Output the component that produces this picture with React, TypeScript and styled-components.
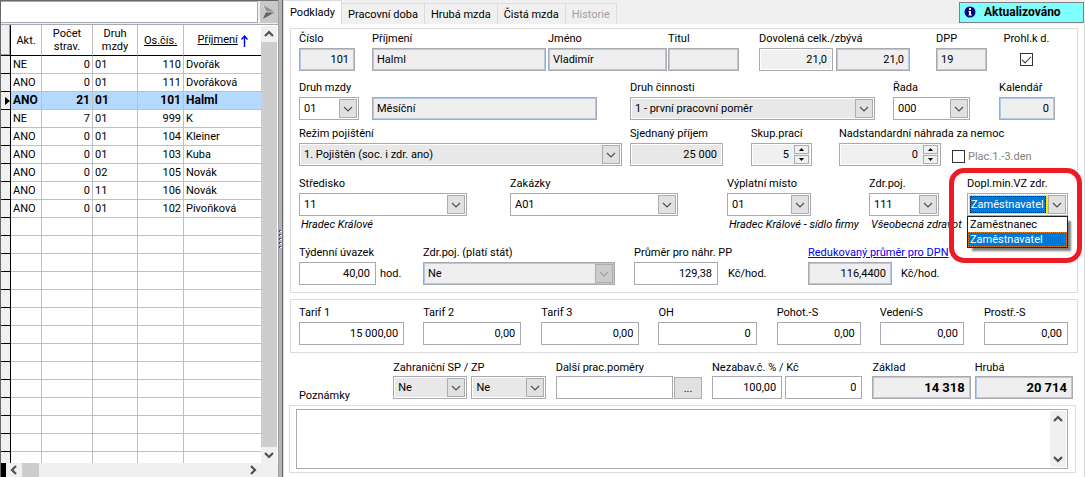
import React, { useId } from 'react';
import styled, { createGlobalStyle, css } from 'styled-components';

const Global = createGlobalStyle`
  *, *::before, *::after { box-sizing: border-box; }
  body { margin: 0; background: #f0f0f0; }
  body, input, select, textarea, button {
    font-family: Roboto, "Liberation Sans", sans-serif;
    font-size: 11px;
    color: #000;
  }
`;

const line = '#a9a9b2';
const soft = '#dcdcdc';

const Window = styled.div`
  display: flex;
  height: 100vh;
  min-height: 460px;
  min-width: 900px;
  overflow: hidden;
`;

/* ---------- left: employee list ---------- */

const ListPane = styled.aside`
  display: flex;
  flex-direction: column;
  flex: none;
  width: 278px;
  border-top: 1px solid #696969;
  border-left: 1px solid #696969;
`;

const SearchBar = styled.div`
  display: flex;
  gap: 2px;
  height: 23px;
`;

const SearchInput = styled.input`
  flex: 1;
  min-width: 0;
  height: 22px;
  border: 1px solid ${line};
  border-left: 0;
  padding: 0 4px;
  background: #fff;
  outline: 0;
`;

const SearchButton = styled.button`
  display: grid;
  place-items: center;
  width: 18px;
  height: 22px;
  padding: 0;
  border: 0;
  background: #c8c8c8;
`;

const GridArea = styled.div`
  display: flex;
  flex: 1;
  min-height: 0;
  border-top: 1px solid ${line};
  background: #fff;
`;

const TableClip = styled.div`
  flex: 1;
  min-width: 0;
  overflow: hidden;
`;

const Table = styled.table`
  width: 100%;
  table-layout: fixed;
  border-spacing: 0;
`;

const Head = styled.th<{ $under?: boolean }>`
  height: 31px;
  padding: 0;
  border-right: 1px solid #c0c0c0;
  border-bottom: 1px solid #000;
  font-weight: 400;
  line-height: 13px;
  text-decoration: ${p => (p.$under ? 'underline' : 'none')};
  &:last-child { border-right: 0; }
`;

const HeadMark = styled.th`
  padding: 0;
  background: #f0f0f0;
  border-right: 1px solid #000;
  border-bottom: 1px solid #000;
  box-shadow: inset -1px -1px #a0a0a0;
`;

const BodyRow = styled.tr<{ $current?: boolean }>`
  ${p => p.$current && css`
    background: #b5d9ff;
    font-weight: 700;
    font-size: 12px;
  `}
`;

const Cell = styled.td<{ $right?: boolean }>`
  height: 18px;
  padding: 0 2px;
  border-right: 1px solid #c0c0c0;
  border-bottom: 1px solid #c0c0c0;
  line-height: 17px;
  white-space: nowrap;
  text-align: ${p => (p.$right ? 'right' : 'left')};
  &:last-child { border-right: 0; }
`;

const MarkCell = styled.td`
  height: 18px;
  padding: 0;
  background: #f0f0f0;
  border-right: 1px solid #000;
  border-bottom: 1px solid #000;
  line-height: 0;
  text-align: right;
`;

const VScroll = styled.div`
  display: flex;
  flex-direction: column;
  justify-content: space-between;
  flex: none;
  width: 16px;
  margin: 1px 1px 0 0;
  background: #cdcdcd;
`;

const ScrollButton = styled.button`
  display: grid;
  place-items: center;
  width: 16px;
  height: 16px;
  padding: 0;
  border: 0;
  background: #f0f0f0;
`;

const HScroll = styled.div`
  display: flex;
  align-items: center;
  height: 14px;
  margin-right: 17px;
  background: #f0f0f0;
  border-left: 5px solid #000;
  button { height: 14px; }
  button:last-child { margin-left: auto; }
`;

const HThumb = styled.span`
  width: 17px;
  height: 14px;
  background: #cdcdcd;
`;

const Splitter = styled.div`
  display: grid;
  align-items: center;
  flex: none;
  width: 5px;
  background: #b4b4b8;
  border-left: 1px solid #a0a0a4;
  border-right: 1px solid #696969;
`;

/* ---------- right: form ---------- */

const FormPane = styled.main`
  display: flex;
  flex-direction: column;
  flex: 1;
  min-width: 0;
`;

const TabBar = styled.div`
  display: flex;
  align-items: flex-end;
  height: 24px;
`;

const Tab = styled.button<{ $active?: boolean }>`
  height: ${p => (p.$active ? 24 : 21)}px;
  padding: 0 6px;
  border: 1px solid ${soft};
  border-bottom: 0;
  border-left-width: ${p => (p.$active ? 1 : 0)}px;
  background: ${p => (p.$active ? '#fff' : '#f0f0f0')};
  white-space: nowrap;
  &:disabled { color: #a0a0a0; }
`;

const Status = styled.output`
  display: flex;
  align-items: center;
  align-self: center;
  gap: 8px;
  width: 125px;
  height: 21px;
  margin: 0 1px 0 auto;
  padding-left: 4px;
  border: 1px solid #808080;
  background: #80ffff;
  font-size: 12px;
  font-weight: 700;
`;

const Panel = styled.div`
  display: flex;
  flex-direction: column;
  flex: 1;
  min-height: 0;
  padding: 4px 6px;
  border: 1px solid ${soft};
  border-top-width: 0;
  border-bottom: 0;
  background: #fff;
`;

const Group = styled.section<{ $top?: number }>`
  margin-top: ${p => p.$top ?? 0}px;
  padding: 1px 9px 7px 8px;
  border: 1px solid ${soft};
`;

const Row = styled.div<{ $top?: number }>`
  display: flex;
  align-items: flex-end;
  margin-top: ${p => p.$top ?? 0}px;
`;

/* $w is the share of the row; $gap the space before the field */
const FieldBox = styled.div<{ $w: number; $gap?: number }>`
  position: relative;
  flex: ${p => p.$w} 1 0;
  min-width: 0;
  margin-left: ${p => p.$gap ?? 0}px;
`;

const Label = styled.label`
  display: block;
  height: 18px;
  line-height: 18px;
  white-space: nowrap;
`;

const LabelLink = styled.a`
  display: block;
  width: max-content;
  height: 18px;
  line-height: 18px;
  color: #0000f0;
  white-space: nowrap;
`;

type Kind = 'edit' | 'locked' | 'grey' | 'plain' | 'dim';
const fills: Record<Kind, { bg: string; ring: string }> = {
  edit: { bg: '#fff', ring: '#fff' },
  locked: { bg: '#efefef', ring: '#aecbea' },
  grey: { bg: '#e8e8e8', ring: '#fff' },
  plain: { bg: '#f0f0f0', ring: '#fff' },
  dim: { bg: '#efefef', ring: '#aecbea' },
};

const boxStyle = css<{ $kind: Kind }>`
  display: block;
  width: 100%;
  min-width: 0;
  height: 23px;
  margin: 0;
  border: 1px solid ${line};
  border-radius: 0;
  outline: 0;
  background: ${p => fills[p.$kind].bg};
  box-shadow: inset 0 0 0 1px ${p => fills[p.$kind].ring};
`;

const Input = styled.input<{ $kind: Kind; $right?: boolean; $bold?: boolean; $spin?: boolean }>`
  ${boxStyle}
  padding: 0 ${p => (p.$spin ? 22 : 5)}px 0 4px;
  text-align: ${p => (p.$right ? 'right' : 'left')};
  ${p => p.$bold && css`font-weight: 700; font-size: 13px;`}
`;

const Holder = styled.div`
  position: relative;
`;

const Select = styled.select<{ $kind: Kind; $focus?: boolean }>`
  ${boxStyle}
  appearance: none;
  padding: 0 20px 0 4px;
  color: #000;
  opacity: 1;
  ${p => p.$focus && css`
    padding-left: 3px;
    color: #fff;
    background: linear-gradient(#0078d7, #0078d7) 2px 2px / calc(100% - 23px) calc(100% - 4px) no-repeat #ffe800;
  `}
`;

const Arrow = styled.span<{ $faint?: boolean }>`
  position: absolute;
  top: 2px;
  right: 2px;
  display: grid;
  place-items: center;
  width: 18px;
  height: 19px;
  border: 1px solid #adadad;
  background: ${p => (p.$faint ? '#cccccc' : '#e1e1e1')};
  color: ${p => (p.$faint ? '#a0a0a0' : '#505050')};
  pointer-events: none;
`;

const FocusDots = styled.span`
  position: absolute;
  inset: 3px 22px 3px 3px;
  border: 1px dotted #10203c;
  pointer-events: none;
`;

const Spin = styled.span`
  position: absolute;
  top: 2px;
  right: 3px;
  display: grid;
  gap: 1px;
  button {
    display: grid;
    place-items: center;
    width: 15px;
    height: 9px;
    padding: 0;
    border: 1px solid #adadad;
    background: #f0f0f0;
  }
`;

const Hint = styled.p`
  height: 18px;
  margin: 0 0 0 2px;
  line-height: 18px;
  font-style: italic;
  white-space: nowrap;
`;

const Unit = styled.span<{ $w: number; $gap: number }>`
  flex: ${p => p.$w} 1 0;
  min-width: 0;
  margin-left: ${p => p.$gap}px;
  line-height: 23px;
  white-space: nowrap;
`;

const CheckField = styled.label<{ $w: number; $gap: number; $stack?: boolean }>`
  display: flex;
  flex: ${p => p.$w} 1 0;
  min-width: 0;
  flex-direction: ${p => (p.$stack ? 'column' : 'row-reverse')};
  align-items: center;
  justify-content: flex-end;
  gap: ${p => (p.$stack ? 8 : 3)}px;
  height: ${p => (p.$stack ? 41 : 20)}px;
  padding-bottom: ${p => (p.$stack ? 5 : 0)}px;
  margin-left: ${p => p.$gap}px;
  color: ${p => (p.$stack ? '#000' : '#808080')};
  white-space: nowrap;
`;

const Check = styled.input`
  appearance: none;
  display: grid;
  place-items: center;
  flex: none;
  width: 13px;
  height: 13px;
  margin: 0;
  border: 1px solid #333;
  background: #fff;
  &:checked::after {
    content: '';
    width: 9px;
    height: 5px;
    border: solid #333;
    border-width: 0 0 1px 1px;
    transform: translateY(-1px) rotate(-45deg);
  }
`;

const Popup = styled.ul`
  position: absolute;
  z-index: 2;
  top: 41px;
  left: 0;
  right: 0;
  margin: 0;
  padding: 0;
  border: 1px solid #222;
  background: #fff;
  box-shadow: 4px 4px 2px -1px rgba(0, 0, 0, 0.5);
  list-style: none;
`;

const Option = styled.li<{ $on?: boolean }>`
  height: 15px;
  padding: 0 1px;
  border: 1px dotted ${p => (p.$on ? '#e08020' : 'transparent')};
  line-height: 13px;
  ${p => p.$on && css`background: #0078d7; color: #fff;`}
`;

const Highlight = styled.div`
  position: absolute;
  z-index: 3;
  inset: -7px -14px -29px -18px;
  border: 5px solid #ee1b24;
  border-radius: 15px;
  pointer-events: none;
`;

const BottomRow = styled.div`
  display: flex;
  align-items: flex-end;
  margin: 7px 5px 0 9px;
  ${Label} {
    height: 16px;
    line-height: 16px;
  }
`;

const NotesTitle = styled.label<{ $w: number }>`
  flex: ${p => p.$w} 1 0;
  line-height: 14px;
  margin-bottom: -4px;
`;

const MoreButton = styled.button`
  width: 28px;
  height: 22px;
  margin-left: 1px;
  padding: 0;
  border: 1px solid #adadad;
  background: #e1e1e1;
`;

const NotesGroup = styled.section`
  display: flex;
  flex: 1;
  min-height: 50px;
  margin: 6px 2px 0 -1px;
  padding: 3px 7px 3px 6px;
  border: 1px solid ${soft};
`;

const NotesFrame = styled.div`
  display: flex;
  flex: 1;
  padding: 1px;
  border: 1px solid ${line};
`;

const Notes = styled.textarea`
  flex: 1;
  min-width: 0;
  padding: 2px;
  border: 0;
  outline: 0;
  resize: none;
  background: #fff;
`;

const NotesScroll = styled.div`
  display: flex;
  flex-direction: column;
  justify-content: space-between;
  background: #f0f0f0;
`;

/* ---------- small drawings ---------- */

const paths = {
  up: 'M1 7 L5 3 L9 7',
  down: 'M1 3 L5 7 L9 3',
  left: 'M7 1 L3 5 L7 9',
  right: 'M3 1 L7 5 L3 9',
};

const Chevron = ({ dir, thin }: { dir: keyof typeof paths; thin?: boolean }) => (
  <svg width="10" height="10" viewBox="0 0 10 10" fill="none" stroke={thin ? 'currentColor' : '#505050'} strokeWidth={thin ? 1.2 : 2.2}>
    <path d={paths[dir]} />
  </svg>
);

const Tri = ({ up }: { up?: boolean }) => (
  <svg width="5" height="3" viewBox="0 0 5 3"><path d={up ? 'M0 3 L2.5 0 L5 3Z' : 'M0 0 L2.5 3 L5 0Z'} /></svg>
);

/* ---------- composed fields ---------- */

interface FieldProps {
  w: number;
  gap?: number;
  label: string;
  value?: string;
  kind?: Kind;
  right?: boolean;
  bold?: boolean;
  hidden?: boolean;
  link?: boolean;
}

const TextField = ({ w, gap, label, value = '', kind = 'edit', right, bold, hidden, link }: FieldProps) => {
  const id = useId();
  return (
    <FieldBox $w={w} $gap={gap}>
      {link && <LabelLink href="#prumer">{label}</LabelLink>}
      {!link && !hidden && <Label htmlFor={id}>{label}</Label>}
      <Input id={id} aria-label={label} $kind={kind} $right={right} $bold={bold} defaultValue={value} readOnly={kind !== 'edit'} />
    </FieldBox>
  );
};

const SpinField = ({ w, gap, label, value }: FieldProps) => {
  const id = useId();
  return (
    <FieldBox $w={w} $gap={gap}>
      <Label htmlFor={id}>{label}</Label>
      <Holder>
        <Input id={id} $kind="plain" $right $spin defaultValue={value} />
        <Spin>
          <button aria-label="Zvýšit"><Tri up /></button>
          <button aria-label="Snížit"><Tri /></button>
        </Spin>
      </Holder>
    </FieldBox>
  );
};

const SelectField = ({ w, gap, label, value = '', kind = 'edit', hidden, hint }: FieldProps & { hint?: string }) => {
  const id = useId();
  return (
    <FieldBox $w={w} $gap={gap}>
      {!hidden && <Label htmlFor={id}>{label}</Label>}
      <Holder>
        <Select id={id} aria-label={label} $kind={kind} defaultValue={value}>
          <option>{value}</option>
        </Select>
        <Arrow $faint={kind === 'dim'}><Chevron dir="down" thin /></Arrow>
      </Holder>
      {hint !== undefined && <Hint>{hint}</Hint>}
    </FieldBox>
  );
};

const SupplementField = () => (
  <FieldBox $w={101} $gap={28}>
    <Label htmlFor="dopl">Dopl.min.VZ zdr.</Label>
    <Holder>
      <Select id="dopl" $kind="edit" $focus defaultValue="Zaměstnavatel">
        <option>Zaměstnanec</option>
        <option>Zaměstnavatel</option>
      </Select>
      <FocusDots />
      <Arrow><Chevron dir="down" thin /></Arrow>
    </Holder>
    <Hint />
    <Popup role="listbox" aria-label="Dopl.min.VZ zdr.">
      <Option role="option" aria-selected="false">Zaměstnanec</Option>
      <Option role="option" aria-selected="true" $on>Zaměstnavatel</Option>
    </Popup>
    <Highlight />
  </FieldBox>
);

/* ---------- data ---------- */

const people = [
  ['NE', '0', '01', '110', 'Dvořák'],
  ['ANO', '0', '01', '111', 'Dvořáková'],
  ['ANO', '21', '01', '101', 'Halml'],
  ['NE', '7', '01', '999', 'K'],
  ['ANO', '0', '01', '104', 'Kleiner'],
  ['ANO', '0', '01', '103', 'Kuba'],
  ['ANO', '0', '02', '105', 'Novák'],
  ['ANO', '0', '11', '106', 'Novák'],
  ['ANO', '0', '01', '102', 'Pivoňková'],
];
const current = 2;
const blanks = Array.from({ length: 60 }, () => ['', '', '', '', '']);

const EmployeeList = () => (
  <ListPane>
    <SearchBar>
      <SearchInput aria-label="Hledat" />
      <SearchButton aria-label="Hledat dále">
        <svg width="14" height="16" viewBox="0 0 14 16">
          <path d="M1 1 L13 8 L4 8Z" fill="#8e9496" />
          <path d="M13 8 L1 15 L4 8Z" fill="#5e6468" />
          <path d="M1 1 L4 8 L13 8" fill="none" stroke="#dfe6ea" strokeWidth="0.8" />
        </svg>
      </SearchButton>
    </SearchBar>
    <GridArea>
      <TableClip>
        <Table>
          <colgroup>
            <col width="10" /><col width="31" /><col width="51" /><col width="45" /><col width="46" /><col />
          </colgroup>
          <thead>
            <tr>
              <HeadMark />
              <Head>Akt.</Head>
              <Head>Počet<br />strav.</Head>
              <Head>Druh<br />mzdy</Head>
              <Head $under>Os.čís.</Head>
              <Head>
                <u>Příjmení</u>{' '}
                <svg width="7" height="12" viewBox="0 0 7 12" style={{ verticalAlign: 'middle' }}>
                  <path d="M3.5 12V1M0.5 4.5L3.5 1L6.5 4.5" fill="none" stroke="#00f" strokeWidth="1.4" />
                </svg>
              </Head>
            </tr>
          </thead>
          <tbody>
            {[...people, ...blanks].map((row, i) => (
              <BodyRow key={i} $current={i === current}>
                <MarkCell>
                  {i === current && <svg width="5" height="8" viewBox="0 0 5 8"><path d="M0 0L5 4L0 8Z" /></svg>}
                </MarkCell>
                {row.map((text, c) => (
                  <Cell key={c} $right={c === 1 || c === 3}>{text}</Cell>
                ))}
              </BodyRow>
            ))}
          </tbody>
        </Table>
      </TableClip>
      <VScroll>
        <ScrollButton aria-label="Nahoru"><Chevron dir="up" /></ScrollButton>
        <ScrollButton aria-label="Dolů"><Chevron dir="down" /></ScrollButton>
      </VScroll>
    </GridArea>
    <HScroll>
      <ScrollButton aria-label="Vlevo"><Chevron dir="left" /></ScrollButton>
      <HThumb />
      <ScrollButton aria-label="Vpravo"><Chevron dir="right" /></ScrollButton>
    </HScroll>
  </ListPane>
);

export default function App() {
  return (
    <Window>
      <Global />
      <EmployeeList />
      <Splitter>
        <svg width="3" height="18" viewBox="0 0 3 18">
          {[0, 4, 8, 12, 16].map(y => (
            <g key={y}>
              <path d={`M0 ${y}h2v2h-2z`} fill="#34536f" />
              <path d={`M1 ${y + 1}h2v1h-2z`} fill="#e8f2ff" />
            </g>
          ))}
        </svg>
      </Splitter>
      <FormPane>
        <TabBar>
          <Tab $active>Podklady</Tab>
          <Tab>Pracovní doba</Tab>
          <Tab>Hrubá mzda</Tab>
          <Tab>Čistá mzda</Tab>
          <Tab disabled>Historie</Tab>
          <Status>
            <svg width="12" height="12" viewBox="0 0 12 12">
              <circle cx="6" cy="6" r="5.5" fill="#000080" />
              <path d="M5 2h2v2H5zM4.500 5H7v3.500h1v1H4.500v-1H5V6h-.5z" fill="#fff" />
            </svg>
            Aktualizováno
          </Status>
        </TabBar>
        <Panel>
          <Group>
            <Row>
              <TextField w={56} label="Číslo" value="101" kind="locked" right />
              <TextField w={174} gap={17} label="Příjmení" value="Halml" kind="locked" />
              <TextField w={119} gap={2} label="Jméno" value="Vladimír" kind="locked" />
              <TextField w={71} gap={1} label="Titul" kind="locked" />
              <TextField w={74} gap={20} label="Dovolená celk./zbývá" value="21,0" kind="plain" right />
              <TextField w={74} gap={3} label="Dovolená zbývá" value="21,0" kind="locked" right hidden />
              <TextField w={51} gap={26} label="DPP" value="19" kind="locked" />
              <CheckField $w={43} $gap={18} $stack>
                Prohl.k d.
                <Check type="checkbox" defaultChecked />
              </CheckField>
              <Unit $w={1} $gap={19} />
            </Row>
            <Row $top={8}>
              <SelectField w={60} label="Druh mzdy" value="01" />
              <TextField w={225} gap={13} label="Název druhu mzdy" value="Měsíční" kind="locked" hidden />
              <SelectField w={245} gap={33} label="Druh činnosti" value="1 - první pracovní poměr" kind="grey" />
              <SelectField w={77} gap={18} label="Řada" value="000" />
              <TextField w={56} gap={29} label="Kalendář" value="0" kind="locked" right />
              <Unit $w={1} $gap={12} />
            </Row>
            <Row $top={5}>
              <SelectField w={323} label="Režim pojištění" value="1. Pojištěn (soc. i zdr. ano)" kind="grey" />
              <TextField w={93} gap={8} label="Sjednaný příjem" value="25 000" kind="grey" right />
              <SpinField w={61} gap={28} label="Skup.prací" value="5" />
              <SpinField w={102} gap={27} label="Nadstandardní náhrada za nemoc" value="0" />
              <CheckField $w={116} $gap={11}>
                Plac.1.-3.den
                <Check type="checkbox" />
              </CheckField>
            </Row>
            <Row $top={9}>
              <SelectField w={168} label="Středisko" value="11" hint="Hradec Králové" />
              <SelectField w={168} gap={43} label="Zakázky" value="A01" hint="" />
              <SelectField w={84} gap={49} label="Výplatní místo" value="01" hint="Hradec Králové - sídlo firmy" />
              <SelectField w={70} gap={58} label="Zdr.poj." value="111" hint="Všeobecná zdravot" />
              <SupplementField />
            </Row>
            <Row $top={10}>
              <TextField w={77} label="Týdenní úvazek" value="40,00" right />
              <Unit $w={43} $gap={4}>hod.</Unit>
              <SelectField w={192} label="Zdr.poj. (platí stát)" value="Ne" kind="dim" />
              <TextField w={84} gap={19} label="Průměr pro náhr. PP" value="129,38" right />
              <Unit $w={80} $gap={10}>Kč/hod.</Unit>
              <TextField w={84} label="Redukovaný průměr pro DPN" value="116,4400" kind="locked" right link />
              <Unit $w={167} $gap={9}>Kč/hod.</Unit>
            </Row>
          </Group>

          <Group $top={6}>
            <Row $top={3}>
              <TextField w={105} label="Tarif 1" value="15 000,00" right />
              <TextField w={98} gap={19} label="Tarif 2" value="0,00" right />
              <TextField w={98} gap={20} label="Tarif 3" value="0,00" right />
              <TextField w={98} gap={19} label="OH" value="0" right />
              <TextField w={84} gap={20} label="Pohot.-S" value="0,00" right />
              <TextField w={84} gap={19} label="Vedení-S" value="0,00" right />
              <TextField w={84} gap={20} label="Prostř.-S" value="0,00" right />
            </Row>
          </Group>

          <BottomRow>
            <NotesTitle $w={94} htmlFor="poznamky">Poznámky</NotesTitle>
            <SelectField w={74} label="Zahraniční SP / ZP" value="Ne" kind="grey" />
            <SelectField w={74} gap={4} label="Zahraniční ZP" value="Ne" kind="grey" hidden />
            <TextField w={117} gap={10} label="Další prac.poměry" />
            <MoreButton aria-label="Vybrat další poměry">...</MoreButton>
            <TextField w={70} gap={10} label="Nezabav.č. % / Kč" value="100,00" right />
            <TextField w={77} gap={3} label="Nezabavitelná částka Kč" value="0" right hidden />
            <TextField w={98} gap={10} label="Základ" value="14 318" kind="locked" right bold />
            <TextField w={98} gap={4} label="Hrubá" value="20 714" kind="locked" right bold />
          </BottomRow>
          <NotesGroup>
            <NotesFrame>
              <Notes id="poznamky" />
              <NotesScroll>
                <ScrollButton aria-label="Nahoru"><Chevron dir="up" /></ScrollButton>
                <ScrollButton aria-label="Dolů"><Chevron dir="down" /></ScrollButton>
              </NotesScroll>
            </NotesFrame>
          </NotesGroup>
        </Panel>
      </FormPane>
    </Window>
  );
}
